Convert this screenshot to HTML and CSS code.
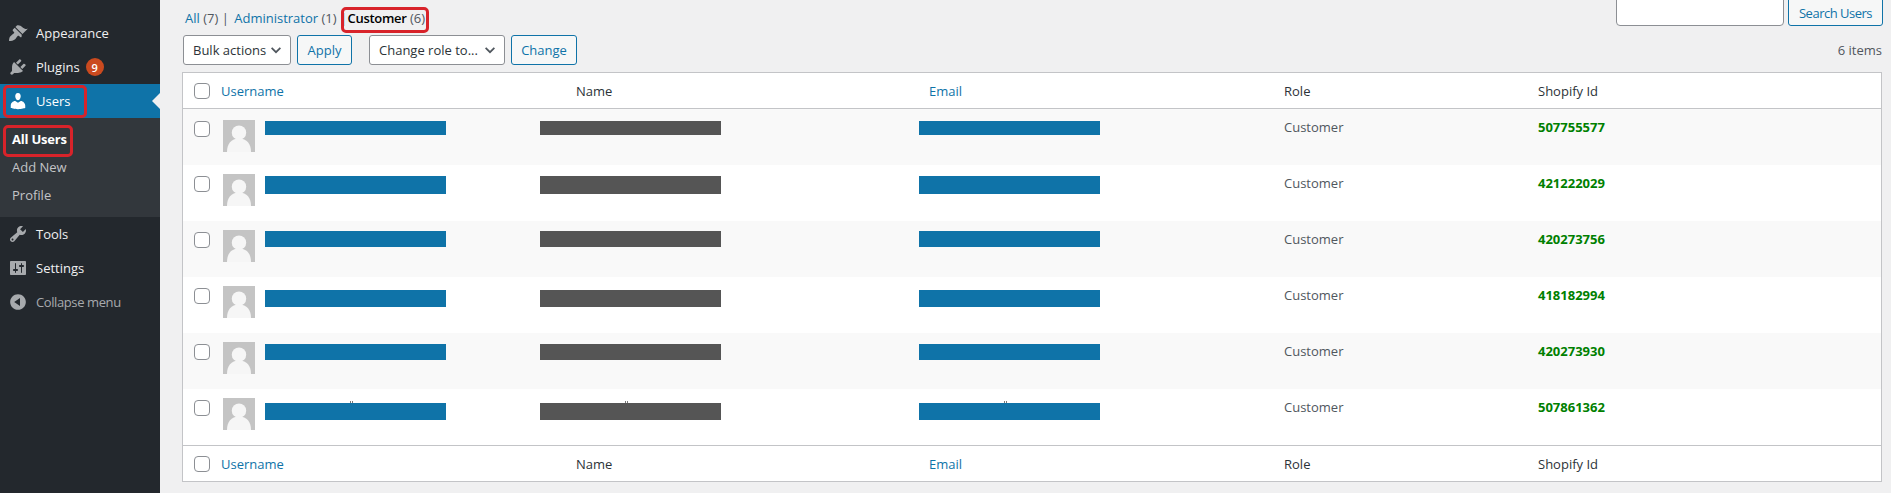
FILE: index.html
```html
<!DOCTYPE html>
<html lang="en">
<head>
<meta charset="utf-8">
<title>Users</title>
<link rel="stylesheet" href="styles.css">
</head>
<body>
<svg class="defs" width="0" height="0" aria-hidden="true">
  <symbol id="mm" viewBox="0 0 32 32"><rect width="32" height="32" fill="#c4c4c4"/><circle cx="16" cy="12.700" r="7.200" fill="#f6f6f6"/><path d="M4 32c0-8 4-13.500 12-13.500S28 24 28 32z" fill="#f6f6f6"/></symbol>
</svg>
<div class="wrap">
<aside class="sidebar">
  <ul class="menu">
    <li class="item"><svg class="ico" viewBox="0 0 20 20"><path d="M14.480 11.060 7.410 3.990l1.500-1.500c.5-.56 2.300-.47 3.510.32 1.210.8 1.430 1.280 2.910 2.100 1.180.64 2.450 1.260 4.450.85zm-.71.71L6.700 4.700 4.930 6.470c-.39.39-.39 1.020 0 1.410l1.060 1.060c.39.39.39 1.030 0 1.420-.6.6-1.430 1.110-2.210 1.690-.35.26-.7.53-1.010.84C1.430 13.230 1 16 1 18c2 0 4.790-.42 6.140-1.770.31-.31.58-.66.84-1.010.58-.78 1.090-1.610 1.690-2.210.39-.39 1.030-.39 1.420 0l1.060 1.060c.39.39 1.020.39 1.410 0z"/></svg><span>Appearance</span></li>
    <li class="item"><svg class="ico" viewBox="0 0 20 20"><path d="M13.110 4.360 9.870 7.600 8 5.730l3.240-3.240c.35-.34 1.050-.2 1.560.32.52.51.66 1.210.31 1.550zm-8 1.770.91-1.120 9.010 9.010-1.190.84c-.71.71-2.630 1.160-3.820 1.160H6.140L4.900 17.260c-.59.59-1.540.59-2.120 0-.59-.58-.59-1.530 0-2.120l1.240-1.240v-3.880c0-1.130.4-3.190 1.090-3.890zm7.260 3.970 3.240-3.240c.34-.35 1.040-.21 1.550.31.52.51.66 1.210.31 1.550l-3.240 3.250z"/></svg><span>Plugins</span><b class="badge">9</b></li>
    <li class="item current"><svg class="ico" viewBox="0 0 20 20"><path d="M10 9.250c-2.270 0-2.730-3.440-2.730-3.440C7 4.020 7.820 2 9.970 2c2.160 0 2.980 2.020 2.710 3.810 0 0-.41 3.440-2.680 3.440zm0 2.570L12.720 10c2.390 0 4.520 2.330 4.520 4.530v2.490s-3.650 1.130-7.240 1.130c-3.650 0-7.240-1.130-7.240-1.130v-2.490c0-2.250 1.940-4.480 4.470-4.480z"/></svg><span>Users</span></li>
    <li class="submenu">
      <a class="sub active">All Users</a>
      <a class="sub">Add New</a>
      <a class="sub">Profile</a>
    </li>
    <li class="item"><svg class="ico" viewBox="0 0 20 20"><path d="M16.680 9.770c-1.340 1.340-3.300 1.670-4.950.99l-5.410 6.520c-.99.99-2.590.99-3.580 0s-.99-2.590 0-3.570l6.520-5.420c-.68-1.650-.35-3.610.99-4.950 1.280-1.280 3.120-1.620 4.720-1.060l-2.890 2.890 2.820 2.820 2.860-2.870c.53 1.580.18 3.390-1.080 4.650zM3.810 16.210c.4.390 1.040.39 1.430 0 .4-.4.4-1.040 0-1.430-.39-.4-1.030-.4-1.430 0-.39.39-.39 1.030 0 1.430z"/></svg><span>Tools</span></li>
    <li class="item"><svg class="ico" viewBox="0 0 20 20"><path d="M18 16V4c0-.55-.45-1-1-1H3c-.55 0-1 .45-1 1v12c0 .55.45 1 1 1h14c.55 0 1-.45 1-1zM8 11h1c.55 0 1 .45 1 1s-.45 1-1 1H8v1.500c0 .28-.22.5-.5.5s-.5-.22-.5-.5V13H6c-.55 0-1-.45-1-1s.45-1 1-1h1V5.500c0-.28.22-.5.5-.5s.5.220.5.5V11zm5-2h-1c-.55 0-1-.45-1-1s.45-1 1-1h1V5.500c0-.28.22-.5.5-.5s.5.220.5.5V7h1c.55 0 1 .45 1 1s-.45 1-1 1h-1v5.500c0 .28-.22.5-.5.5s-.5-.22-.5-.5V9z"/></svg><span>Settings</span></li>
    <li class="item collapse"><svg class="ico" viewBox="0 0 20 20"><path d="M10 2.160c4.330 0 7.840 3.510 7.840 7.840s-3.510 7.840-7.840 7.840S2.160 14.330 2.160 10 5.710 2.160 10 2.160zm2 11.720V6.120L6.180 9.970z"/></svg><span>Collapse menu</span></li>
  </ul>
</aside>
<main class="content">
  <div class="search">
    <input class="search-input" type="text">
    <button class="btn">Search Users</button>
  </div>
  <div class="views">
    <a>All</a> <i>(7)</i> <em class="sep-a">|</em> <a>Administrator</a> <i>(1)</i> <em class="sep-b">|</em> <a class="now">Customer</a> <i>(6)</i>
  </div>
  <div class="nav">
    <div class="select sel-bulk">Bulk actions<svg class="chev" viewBox="0 0 16 16"><path d="M3 5.500 8 10.500 13 5.500"/></svg></div>
    <button class="btn btn-apply">Apply</button>
    <div class="select sel-role">Change role to...<svg class="chev" viewBox="0 0 16 16"><path d="M3 5.500 8 10.500 13 5.500"/></svg></div>
    <button class="btn btn-change">Change</button>
    <span class="count">6 items</span>
  </div>
  <table class="users">
    <thead>
      <tr><th class="c-check"><span class="cb"></span></th><th class="c-user link">Username</th><th class="c-name">Name</th><th class="c-mail link">Email</th><th class="c-role">Role</th><th>Shopify Id</th></tr>
    </thead>
    <tbody>
      <tr class="alt r1"><td class="c-check"><span class="cb"></span></td><td><div class="uc"><svg class="avatar"><use href="#mm"/></svg><span class="bar blue"></span></div></td><td><span class="bar gray b-name"></span></td><td><span class="bar blue b-mail"></span></td><td class="txt">Customer</td><td class="sid">507755577</td></tr>
      <tr class="r2"><td class="c-check"><span class="cb"></span></td><td><div class="uc"><svg class="avatar"><use href="#mm"/></svg><span class="bar blue"></span></div></td><td><span class="bar gray b-name"></span></td><td><span class="bar blue b-mail"></span></td><td class="txt">Customer</td><td class="sid">421222029</td></tr>
      <tr class="alt r3"><td class="c-check"><span class="cb"></span></td><td><div class="uc"><svg class="avatar"><use href="#mm"/></svg><span class="bar blue"></span></div></td><td><span class="bar gray b-name"></span></td><td><span class="bar blue b-mail"></span></td><td class="txt">Customer</td><td class="sid">420273756</td></tr>
      <tr class="r4"><td class="c-check"><span class="cb"></span></td><td><div class="uc"><svg class="avatar"><use href="#mm"/></svg><span class="bar blue"></span></div></td><td><span class="bar gray b-name"></span></td><td><span class="bar blue b-mail"></span></td><td class="txt">Customer</td><td class="sid">418182994</td></tr>
      <tr class="alt r5"><td class="c-check"><span class="cb"></span></td><td><div class="uc"><svg class="avatar"><use href="#mm"/></svg><span class="bar blue"></span></div></td><td><span class="bar gray b-name"></span></td><td><span class="bar blue b-mail"></span></td><td class="txt">Customer</td><td class="sid">420273930</td></tr>
      <tr class="r6"><td class="c-check"><span class="cb"></span></td><td><div class="uc"><svg class="avatar"><use href="#mm"/></svg><span class="bar blue"></span></div></td><td><span class="bar gray b-name"></span></td><td><span class="bar blue b-mail"></span></td><td class="txt">Customer</td><td class="sid">507861362</td></tr>
    </tbody>
    <tfoot>
      <tr><th class="c-check"><span class="cb"></span></th><th class="c-user link">Username</th><th class="c-name">Name</th><th class="c-mail link">Email</th><th class="c-role">Role</th><th>Shopify Id</th></tr>
    </tfoot>
  </table>
</main>
<span class="mark mark-users"></span>
<span class="mark mark-all"></span>
<span class="mark mark-customer"></span>
</div>
</body>
</html>
```
FILE: styles.css
```css
* { box-sizing: border-box; }
html, body { margin: 0; padding: 0; height: 493px; overflow: hidden; }
body { background: #f0f0f1; color: #3c434a; font-family: "Open Sans", "Noto Sans", sans-serif; font-size: 13px; }
.defs { position: absolute; }
.wrap { display: flex; height: 493px; position: relative; }

.sidebar { width: 160px; flex: none; background: #23282d; padding-top: 16px; }
.menu { list-style: none; margin: 0; padding: 0; }
.item { height: 34px; display: flex; align-items: center; color: #f0f0f1; font-size: 13px; padding-left: 8px; position: relative; }
.ico { width: 20px; height: 20px; flex: none; fill: #a7aaad; margin-right: 8px; }
.badge { width: 18px; height: 18px; border-radius: 50%; background: #ca4a1f; color: #fff; font-size: 11px; font-weight: 600; display: flex; align-items: center; justify-content: center; margin-left: 6px; }
.current { background: #0f73a8; color: #fff; }
.current .ico { fill: #fff; }
.current::after { content: ""; position: absolute; right: 0; top: 9px; border: 8px solid transparent; border-right-color: #f0f0f1; border-left-width: 0; }
.submenu { background: #32373c; height: 99px; padding-top: 7px; display: flex; flex-direction: column; }
.sub { color: #c3c4c7; font-size: 13px; line-height: 18px; padding: 5px 12px; height: 28px; }
.active { color: #fff; font-weight: 700; letter-spacing: -.2px; }
.collapse { color: #a7aaad; letter-spacing: -.4px; }

.content { flex: 1; min-width: 0; position: relative; padding: 0 9px 0 22px; }
.search { position: absolute; right: 8px; top: -8px; display: flex; gap: 4px; }
.search-input { width: 168px; height: 34px; border: 1px solid #8c8f94; border-radius: 4px; background: #fff; padding: 0; }
.btn { height: 30px; background: #f6f7f7; border: 1px solid #0f73a8; border-radius: 3px; color: #0f73a8; font: inherit; padding: 0; }
.search .btn { width: 95px; height: 34px; padding-top: 8px; line-height: 18px; letter-spacing: -.5px; }
.views { height: 18px; margin-top: 9px; line-height: 18px; color: #50575e; padding-left: 3px; white-space: nowrap; }
.views a { color: #0f73a8; }
.views i { font-style: normal; }
.views em { font-style: normal; }
.views .sep-a { margin-right: 2px; }
.views .sep-b { margin-right: -3px; }
.views .now { color: #000; font-weight: 600; letter-spacing: -.3px; }
.nav { display: flex; align-items: center; margin-top: 8px; height: 30px; padding-left: 1px; }
.select { height: 30px; border: 1px solid #8c8f94; border-radius: 3px; background: #fff; color: #2c3338; display: flex; align-items: center; justify-content: space-between; padding: 0 7px 0 9px; white-space: nowrap; }
.sel-bulk { width: 108px; }
.sel-role { width: 136px; margin-left: 17px; }
.chev { width: 14px; height: 14px; flex: none; fill: none; stroke: #50575e; stroke-width: 2; }
.btn-apply { width: 55px; margin-left: 6px; }
.btn-change { width: 66px; margin-left: 6px; }
.count { margin-left: auto; color: #50575e; }

.users { width: 100%; margin-top: 7px; border-collapse: separate; border-spacing: 0; table-layout: fixed; background: #fff; border: 1px solid #c3c4c7; }
th { height: 36px; padding: 0; font-weight: 400; text-align: left; color: #2c3338; }
thead th { border-bottom: 1px solid #c3c4c7; }
tfoot th { border-top: 1px solid #c3c4c7; }
td { height: 56px; padding: 0; vertical-align: top; line-height: 18px; }
.alt td { background: #f9f9f9; }
.link { color: #0f73a8; }
.c-check { width: 38px; }
.c-user { width: 355px; }
.c-name { width: 353px; }
.c-mail { width: 355px; }
.c-role { width: 254px; }
.cb { display: block; width: 16px; height: 16px; margin: 0 0 0 11px; border: 1px solid #8c8f94; border-radius: 4px; background: #fff; }
td .cb { margin-top: 11px; }
.r1 td .cb { margin-top: 12px; }
.uc { display: flex; gap: 10px; margin: 9px 0 0 2px; align-items: flex-start; }
.r1 .uc { margin-top: 11px; }
.avatar { width: 32px; height: 32px; flex: none; display: block; }
.txt, .sid { padding-top: 9px; }
.txt { color: #50575e; }
.sid { color: #008000; font-weight: 700; }

.bar { display: block; width: 181px; height: 14px; position: relative; }
.blue { background: #0f73a8; }
.gray { background: #555; }
.b-name { margin-left: -36px; }
.b-mail { margin-left: -10px; }
.r1 .bar { height: 14px; margin-top: 12px; }
.r2 .bar { height: 18px; margin-top: 11px; }
.r3 .bar { height: 16px; margin-top: 10px; }
.r4 .bar { height: 17px; margin-top: 13px; }
.r5 .bar { height: 16px; margin-top: 11px; }
.r6 .bar { height: 17px; margin-top: 14px; }
.r1 .uc .bar { margin-top: 1px; }
.r2 .uc .bar { margin-top: 2px; }
.r3 .uc .bar { margin-top: 1px; }
.r4 .uc .bar { margin-top: 4px; }
.r5 .uc .bar { margin-top: 2px; }
.r6 .uc .bar { margin-top: 5px; }
.r6 .bar::before { content: ""; position: absolute; top: -2px; left: 85px; width: 1px; height: 2px; background: #777; box-shadow: 2px 0 0 #777; }

.mark { position: absolute; border: 3px solid #d8232a; border-radius: 5px; }
.mark-users { left: 3px; top: 85px; width: 84px; height: 33px; }
.mark-all { left: 3px; top: 125px; width: 70px; height: 32px; }
.mark-customer { left: 341px; top: 7px; width: 88px; height: 26px; }
```
